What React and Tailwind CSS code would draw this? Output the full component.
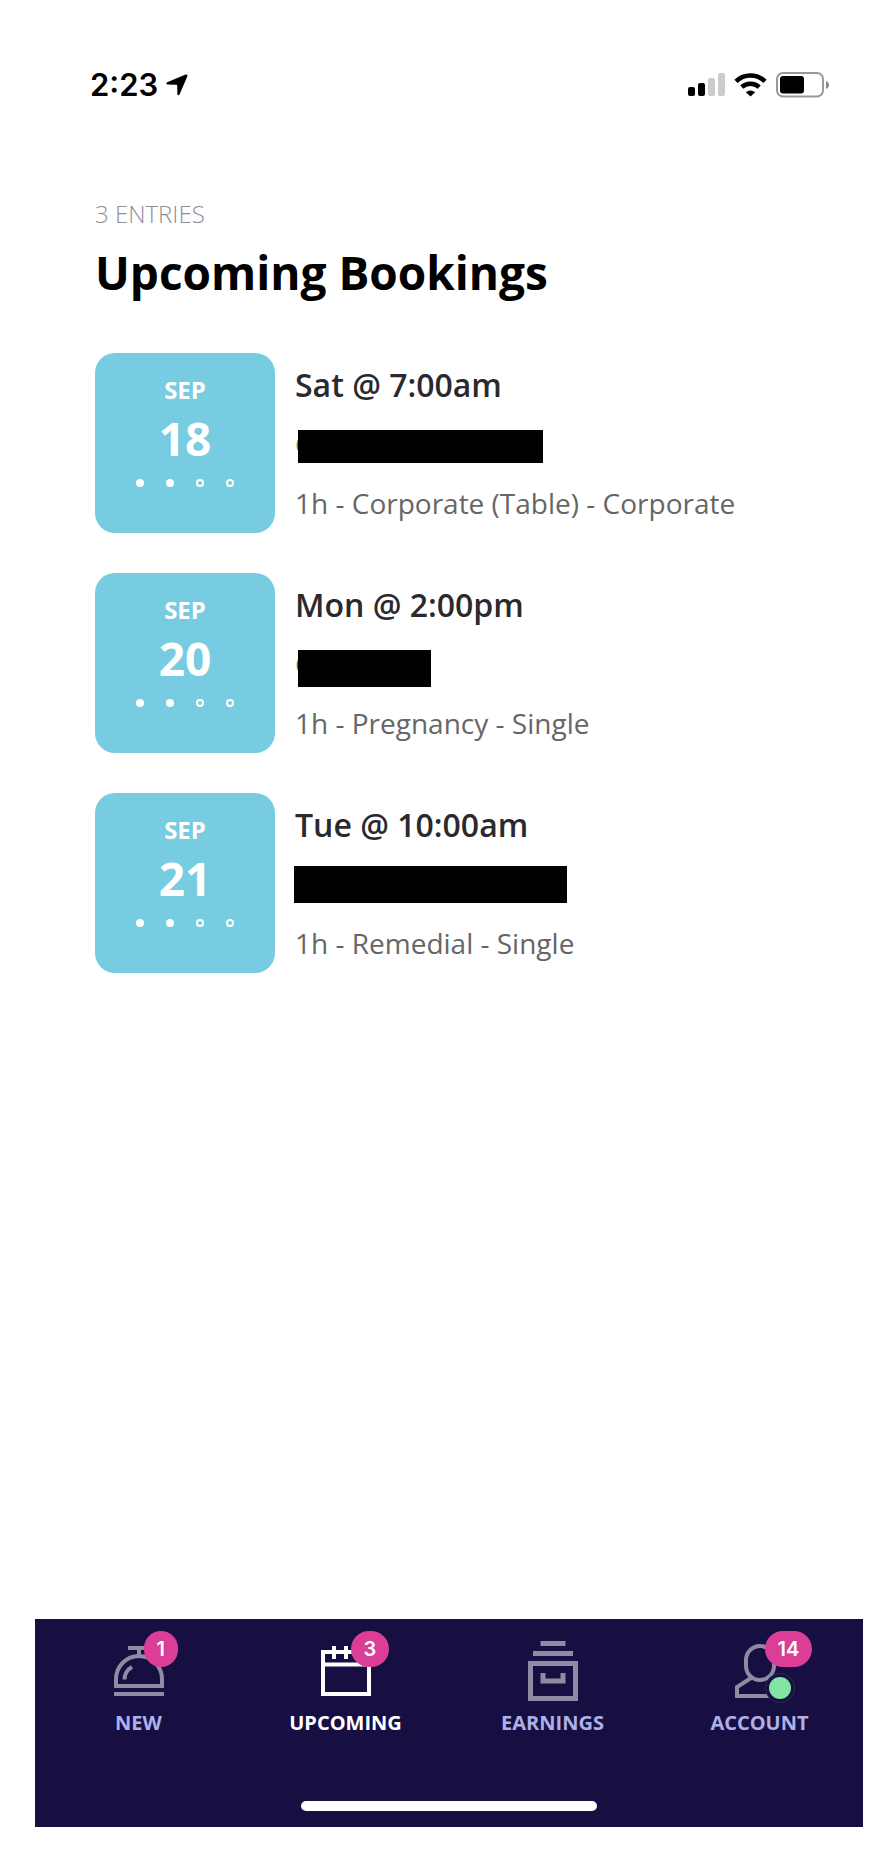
import { useState } from "react";
import clsx from "clsx";

const bookings = [
  {
    id: 1,
    month: "SEP",
    day: "18",
    time: "Sat @ 7:00am",
    details: "1h - Corporate (Table) - Corporate",
    initial: "C",
    mask: "left-[3px] top-[6px] w-[245px] h-[33px]",
  },
  {
    id: 2,
    month: "SEP",
    day: "20",
    time: "Mon @ 2:00pm",
    details: "1h - Pregnancy - Single",
    initial: "C",
    mask: "left-[3px] top-[6px] w-[133px] h-[37px]",
  },
  {
    id: 3,
    month: "SEP",
    day: "21",
    time: "Tue @ 10:00am",
    details: "1h - Remedial - Single",
    initial: "",
    mask: "-left-px top-[2px] w-[273px] h-[37px]",
  },
];

const BellIcon = () => (
  <svg width="60" height="60" viewBox="0 0 60 60" fill="none" stroke="currentColor" strokeWidth="4">
    <path d="M19 7H41M30 7V15" />
    <path d="M7 45V38a23 23 0 0 1 46 0V45Z" />
    <path d="M15.500 38.500C15.500 33 18.500 28.500 23 26" />
    <path d="M5 53H55" />
  </svg>
);

const CalendarIcon = () => (
  <svg width="60" height="60" viewBox="0 0 60 60" fill="none" stroke="currentColor" strokeWidth="4">
    <rect x="7" y="11" width="46" height="42" />
    <path d="M7 23.500H53" />
    <path d="M18 5V18M30 5V18M42 5V18" />
  </svg>
);

const DrawerIcon = () => (
  <svg width="60" height="60" viewBox="0 0 60 60" fill="none" stroke="currentColor" strokeWidth="5">
    <path d="M17.500 2.500H42.500M10 12.500H50" />
    <rect x="7.500" y="22.500" width="45" height="35" />
    <path d="M20 32V40H40V32" />
  </svg>
);

const PersonIcon = () => (
  <svg width="60" height="60" viewBox="0 0 60 60" fill="none" stroke="currentColor" strokeWidth="4">
    <rect x="16" y="5" width="28" height="34" rx="14" />
    <path d="M22.500 36L7 46V55H53V46L37.500 36" />
  </svg>
);

const tabs = [
  { id: "new", label: "NEW", icon: BellIcon, count: 1 },
  { id: "upcoming", label: "UPCOMING", icon: CalendarIcon, count: 3 },
  { id: "earnings", label: "EARNINGS", icon: DrawerIcon },
  { id: "account", label: "ACCOUNT", icon: PersonIcon, count: 14, online: true },
];

const StatusBar = () => (
  <div className="flex items-center justify-between h-10 pl-[55px] pr-[33px]">
    <div className="flex items-center gap-2 font-['Inter',sans-serif] text-[31px] leading-10 font-semibold">
      <span>2:23</span>
      <svg width="22" height="22" viewBox="0 0 22 22" fill="currentColor">
        <path d="M19.600.6 1.200 8.300C0 8.900.2 10.300 1.500 10.400L10.300 10.700Q11.200 10.700 11.200 11.600L11.400 20C11.500 21.400 12.900 21.600 13.500 20.400L21.300 2.400C21.800 1.100 20.900.1 19.600.6Z" />
      </svg>
    </div>
    <div className="flex items-center gap-[9px]">
      <svg width="37" height="24" viewBox="0 0 37 24">
        <rect x="0" y="14" width="7" height="9" rx="2" />
        <rect x="10" y="10" width="7" height="13" rx="2" />
        <rect x="20" y="5" width="7" height="18" rx="2" fill="#cccccc" />
        <rect x="30" y="0" width="7" height="23" rx="2" fill="#cccccc" />
      </svg>
      <svg width="33" height="24" viewBox="0 0 33 24" fill="none" stroke="#000" strokeWidth="4.600">
        <path d="M2 8.300A21 21 0 0 1 31 8.300" />
        <path d="M7.800 14.200A12.500 12.500 0 0 1 25.200 14.200" />
        <path d="M11.800 19.200A7 7 0 0 1 21.200 19.200L16.500 23.600Z" fill="#000" stroke="none" />
      </svg>
      <svg width="54" height="26" viewBox="0 0 54 26">
        <rect x="1" y="1" width="46" height="23.500" rx="6" fill="none" stroke="#999" strokeWidth="2" />
        <rect x="4" y="4" width="24" height="17.500" rx="3" />
        <path d="M50 9C54 10.500 54 15.500 50 17Z" fill="#888" />
      </svg>
    </div>
  </div>
);

const DateCard = ({ month, day }) => (
  <div className="flex flex-col items-center shrink-0 size-[180px] pt-[21px] rounded-[20px] bg-[#78cce1] text-white font-bold">
    <span className="text-2xl leading-8">{month}</span>
    <span className="mt-0.5 text-[46px] leading-[60px]">{day}</span>
    <div className="flex gap-[22px] mt-[11px]">
      <span className="size-2 rounded-full bg-white" />
      <span className="size-2 rounded-full bg-white" />
      <span className="size-2 rounded-full border-2 border-white" />
      <span className="size-2 rounded-full border-2 border-white" />
    </div>
  </div>
);

const Booking = ({ booking }) => (
  <li className="flex gap-5">
    <DateCard month={booking.month} day={booking.day} />
    <div className="flex flex-col gap-[19px] flex-1 min-w-0 pt-3">
      <h2 className="text-[32px] leading-10 font-semibold text-[#2a2a2e]">
        {booking.time}
      </h2>
      <div className="relative h-10 text-[28px] leading-10 text-[#666]">
        {booking.initial}
        <span className={clsx("absolute bg-black", booking.mask)} />
      </div>
      <p className="text-[28px] leading-10 text-[#666]">{booking.details}</p>
    </div>
  </li>
);

const TabBar = ({ active, onChange }) => (
  <nav className="bg-[#170f42] pt-[22px] pb-4">
    <div className="grid grid-cols-4">
      {tabs.map((tab) => (
        <button
          key={tab.id}
          type="button"
          onClick={() => onChange(tab.id)}
          className={clsx(
            "flex flex-col items-center gap-[9px] text-xl leading-[26px] font-bold",
            active === tab.id ? "text-white" : "text-[#aeb0e8]"
          )}
        >
          <span
            className={clsx(
              "relative",
              active === tab.id ? "text-white" : "text-[#8f8ba5]"
            )}
          >
            <tab.icon />
            {tab.online && (
              <span className="absolute left-[35px] top-8 size-[30px] rounded-full border border-[#1e3150] bg-[#170f42] p-[3px]">
                <span className="block size-[22px] rounded-full bg-[#83e5a3]" />
              </span>
            )}
            {tab.count && (
              <span className="absolute left-[35px] -top-2.5 h-9 px-[13px] rounded-full bg-[#dc3d96] text-white font-['Inter',sans-serif] text-xl leading-9 font-semibold">
                {tab.count}
              </span>
            )}
          </span>
          {tab.label}
        </button>
      ))}
    </div>
    <div className="mx-auto mt-[65px] h-2.5 w-[296px] rounded-full bg-white" />
  </nav>
);

const App = () => {
  const [active, setActive] = useState("upcoming");

  return (
    <div className="min-h-screen flex flex-col bg-white text-black pl-[35px] pr-[22px] pt-[65px] pb-[26px] font-['Open_Sans',sans-serif]">
      <StatusBar />
      <main className="flex-1 px-[60px] pt-[93px] pb-10">
        <p className="text-2xl leading-8 font-light text-[#8e8e99]">3 ENTRIES</p>
        <h1 className="mt-3 text-[46px] leading-[60px] font-bold">
          Upcoming Bookings
        </h1>
        <ul className="mt-[51px] flex flex-col gap-10">
          {bookings.map((booking) => (
            <Booking key={booking.id} booking={booking} />
          ))}
        </ul>
      </main>
      <TabBar active={active} onChange={setActive} />
    </div>
  );
};

export default App;
